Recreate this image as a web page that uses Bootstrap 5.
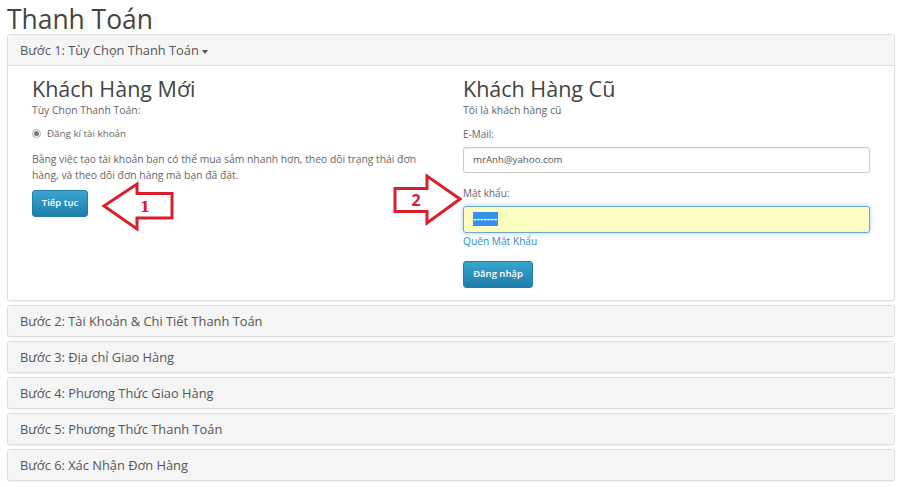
<!DOCTYPE html>
<html lang="vi">
<head>
<meta charset="utf-8">
<title>Thanh Toán</title>
<link rel="stylesheet" href="https://cdn.jsdelivr.net/npm/bootstrap@5.3.0/dist/css/bootstrap.min.css">
<style>
html,body{height:487px;overflow:hidden;background:#fff}
body{font-family:"Open Sans",sans-serif;color:#666;font-size:10px;position:relative}
.page-wrap{padding:0 5px 0 7px}
.page-title{font-family:"Open Sans",sans-serif;font-size:26.4px;line-height:34px;padding-top:2px;margin:0 0 -2px;color:#444;font-weight:400;white-space:nowrap}
.step-card{border:1px solid #ddd;border-radius:3px;box-shadow:0 1px 1px rgba(0,0,0,.05);margin-bottom:4px;overflow:hidden;background:#fff}
.step-head{background:#f5f5f5;height:30px;padding:0 12px;font-size:12.85px;line-height:30px;color:#555;border:0;white-space:nowrap}
.step-open .step-head{height:31px;border-bottom:1px solid #ddd;line-height:30px}
.step-caret{display:inline-block;border-top:4px solid #555;border-left:3.5px solid transparent;border-right:3.5px solid transparent;vertical-align:middle;margin-left:0}
.step-body{padding:0 12px;height:234px}
.col-pad{padding:0 12px}
.sect-title{font-size:21.5px;line-height:26px;margin:10px 0 0;color:#444;font-weight:400;white-space:nowrap}
.note-line{font-size:10.4px;line-height:13px;margin:2px 0 0;white-space:nowrap}
.radio-line{display:flex;align-items:center;gap:6px;margin-top:10px;line-height:13px;height:13px;font-size:9.8px}
.radio-dot{width:9px;height:9px;border-radius:50%;border:1px solid #aaa;background:#fff;display:flex;align-items:center;justify-content:center}
.radio-dot::after{content:"";width:5px;height:5px;border-radius:50%;background:#777}
.para{font-size:10.35px;line-height:16px;margin:11px 0 7px;width:400px}
.act-btn{display:block;height:27px;border:1px solid #2080ad;border-radius:3px;background:linear-gradient(#38a5ce,#1f7dab);color:#fff;font-size:9.5px;font-weight:600;line-height:24px;padding:0;text-align:center}
.btn-next{width:56px}
.btn-login{width:70px;margin-top:13px}
.field-label{font-size:10px;line-height:13px;display:block;margin:0}
.mail-label{margin-top:11px;margin-bottom:6px}
.pass-label{margin-top:14px;margin-bottom:6px}
.field-box{height:26px;border:1px solid #ccc;border-radius:3px;font-size:9.7px;line-height:24px;padding:0 9px;color:#555;background:#fff;box-shadow:inset 0 1px 1px rgba(0,0,0,.075)}
.field-pass{background:#fbfdc0;border-color:#6fa8c6;box-shadow:0 0 5px rgba(102,175,233,.6);height:27px}
.sel-dots{display:inline-block;background:#3390ec;color:#fff;width:25px;height:14px;line-height:13px;font-size:10px;letter-spacing:.3px;vertical-align:middle;margin-top:-1px;font-weight:700;white-space:nowrap}
.forgot{font-size:10.2px;line-height:13px;color:#2d8fbc;text-decoration:none;display:block;margin-top:2px}
.annot{position:absolute;left:0;top:0;pointer-events:none}
.annot text{font-weight:700;fill:#d8202c}
</style>
</head>
<body>
<div class="page-wrap">
  <h1 class="page-title">Thanh Toán</h1>

  <div class="card step-card step-open">
    <div class="card-header step-head">Bước 1: Tùy Chọn Thanh Toán <span class="step-caret"></span></div>
    <div class="card-body step-body">
      <div class="row mx-0">
        <div class="col-6 col-pad">
          <h2 class="sect-title">Khách Hàng Mới</h2>
          <p class="note-line">Tùy Chọn Thanh Toán:</p>
          <div class="radio-line"><span class="radio-dot"></span><span>Đăng kí tài khoản</span></div>
          <p class="para">Bằng việc tạo tài khoản bạn có thể mua sắm nhanh hơn, theo dõi trạng thái đơn hàng, và theo dõi đơn hàng mà bạn đã đặt.</p>
          <a class="btn act-btn btn-next" href="#">Tiếp tục</a>
        </div>
        <div class="col-6 col-pad">
          <h2 class="sect-title">Khách Hàng Cũ</h2>
          <p class="note-line">Tôi là khách hàng cũ</p>
          <label class="field-label mail-label">E-Mail:</label>
          <div class="field-box">mrAnh@yahoo.com</div>
          <label class="field-label pass-label">Mật khẩu:</label>
          <div class="field-box field-pass"><span class="sel-dots">-------</span></div>
          <a class="forgot" href="#">Quên Mật Khẩu</a>
          <a class="btn act-btn btn-login" href="#">Đăng nhập</a>
        </div>
      </div>
    </div>
  </div>

  <div class="card step-card"><div class="card-header step-head">Bước 2: Tài Khoản &amp; Chi Tiết Thanh Toán</div></div>
  <div class="card step-card"><div class="card-header step-head">Bước 3: Địa chỉ Giao Hàng</div></div>
  <div class="card step-card"><div class="card-header step-head">Bước 4: Phương Thức Giao Hàng</div></div>
  <div class="card step-card"><div class="card-header step-head">Bước 5: Phương Thức Thanh Toán</div></div>
  <div class="card step-card"><div class="card-header step-head">Bước 6: Xác Nhận Đơn Hàng</div></div>
</div>

<svg class="annot" width="900" height="487" viewBox="0 0 900 487">
  <path d="M104 206 L137 184 L137 193.500 L172 193.500 L172 218 L137 218 L137 229 Z" fill="#fff" stroke="#d8202c" stroke-width="3"/>
  <text x="145" y="212" font-family="DejaVu Serif" font-size="15" text-anchor="middle">1</text>
  <path d="M460 199 L427 176 L427 188.500 L395 188.500 L395 211.500 L427 211.500 L427 223 Z" fill="#fff" stroke="#d8202c" stroke-width="3"/>
  <text x="416" y="206" font-family="Open Sans" font-size="16" text-anchor="middle">2</text>
</svg>
</body>
</html>
